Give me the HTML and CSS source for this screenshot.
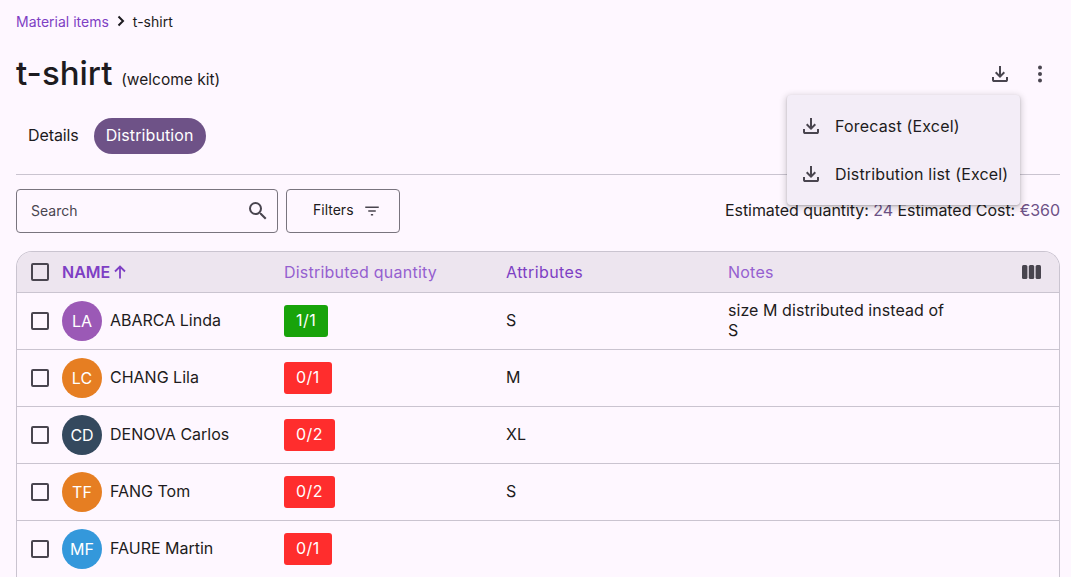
FILE: index.html
```html
<!DOCTYPE html>
<html lang="en">
<head>
<meta charset="utf-8">
<title>t-shirt</title>
<link rel="stylesheet" href="styles.css">
</head>
<body>
<svg class="sprite" width="0" height="0" aria-hidden="true">
  <symbol id="download" viewBox="0 0 24 24"><path d="M12 16 7 11l1.400-1.450 2.600 2.600V4h2v8.150l2.600-2.600L17 11l-5 5zm-6 4q-.825 0-1.413-.587T4 18v-3h2v3h12v-3h2v3q0 .825-.588 1.413T18 20H6z"/></symbol>
</svg>
<main class="page">
  <nav class="crumbs"><a class="crumb-link">Material items</a>
    <svg class="crumb-sep" viewBox="0 0 10 12"><path d="M2.500 1.500 7 6l-4.500 4.500" fill="none" stroke="currentColor" stroke-width="2"/></svg>
    <span>t-shirt</span></nav>
  <header class="title-row">
    <h1 class="title">t-shirt <small class="subtitle">(welcome kit)</small></h1>
    <div class="actions">
      <svg class="icon"><use href="#download"/></svg>
      <svg class="icon" viewBox="0 0 24 24"><circle cx="12" cy="5.500" r="2"/><circle cx="12" cy="12" r="2"/><circle cx="12" cy="18.500" r="2"/></svg>
    </div>
    <div class="menu">
      <div class="menu-item"><svg class="icon"><use href="#download"/></svg>Forecast (Excel)</div>
      <div class="menu-item"><svg class="icon"><use href="#download"/></svg>Distribution list (Excel)</div>
    </div>
  </header>
  <div class="tabs"><span class="tab">Details</span><span class="tab tab-active">Distribution</span></div>
  <div class="toolbar">
    <label class="search"><span class="search-text">Search</span>
      <svg class="icon search-icon" viewBox="0 0 24 24"><path d="M15.500 14h-.79l-.28-.27A6.471 6.471 0 0 0 16 9.500 6.500 6.500 0 1 0 9.500 16c1.610 0 3.090-.59 4.230-1.570l.27.28v.79l5 4.990L20.490 19l-4.990-5zm-6 0C7.010 14 5 11.990 5 9.500S7.010 5 9.500 5 14 7.010 14 9.500 11.990 14 9.500 14z"/></svg></label>
    <button class="filters">Filters
      <svg class="icon filter-icon" viewBox="0 0 24 24"><path d="M3 6h18v2H3zm4 5h10v2H7zm3.500 5h3v2h-3z"/></svg></button>
    <p class="stats">Estimated quantity: <b>24</b> Estimated Cost: <b>€360</b></p>
  </div>
  <section class="table">
    <div class="row head">
      <span class="check"></span>
      <span class="name-head">NAME <svg class="arrow" viewBox="0 0 14 14"><path d="M7 13.500V1.500M2 6.500 7 1.500l5 5" fill="none" stroke="currentColor" stroke-width="1.800"/></svg></span>
      <span class="col-a">Distributed quantity</span>
      <span class="col-b">Attributes</span>
      <span class="col-a col-notes">Notes
        <svg class="columns" viewBox="0 0 19 14"><rect x="0" y="0" width="5.400" height="14" rx="1.500"/><rect x="6.800" y="0" width="5.400" height="14" rx="1.500"/><rect x="13.600" y="0" width="5.400" height="14" rx="1.500"/></svg></span>
    </div>
    <div class="row">
      <span class="check"></span>
      <span class="person"><i class="avatar purple">LA</i><span class="cell-text">ABARCA Linda</span></span>
      <span><em class="badge ok">1/1</em></span><span class="cell-text">S</span>
      <span class="note">size M distributed instead of S</span>
    </div>
    <div class="row">
      <span class="check"></span>
      <span class="person"><i class="avatar orange">LC</i><span class="cell-text">CHANG Lila</span></span>
      <span><em class="badge no">0/1</em></span><span class="cell-text">M</span><span></span>
    </div>
    <div class="row">
      <span class="check"></span>
      <span class="person"><i class="avatar navy">CD</i><span class="cell-text">DENOVA Carlos</span></span>
      <span><em class="badge no">0/2</em></span><span class="cell-text">XL</span><span></span>
    </div>
    <div class="row">
      <span class="check"></span>
      <span class="person"><i class="avatar orange">TF</i><span class="cell-text">FANG Tom</span></span>
      <span><em class="badge no">0/2</em></span><span class="cell-text">S</span><span></span>
    </div>
    <div class="row">
      <span class="check"></span>
      <span class="person"><i class="avatar blue">MF</i><span class="cell-text">FAURE Martin</span></span>
      <span><em class="badge no">0/1</em></span><span></span><span></span>
    </div>
  </section>
</main>
</body>
</html>
```
FILE: styles.css
```css
* { box-sizing: border-box; }
html, body { margin: 0; height: 577px; overflow: hidden; }
body {
  background: #fef7ff;
  color: #1d1b20;
  font-family: "Inter", "Liberation Sans", sans-serif;
  font-size: 16px;
}
.sprite { position: absolute; }
.page { padding: 0 11px 0 16px; }
.icon { width: 24px; height: 24px; fill: #49454f; display: block; }
.crumbs { display: flex; align-items: center; height: 42px; font-size: 14px; gap: 7px; }
.crumb-link { color: #7e3fc4; }
.crumb-sep { width: 10px; height: 12px; color: #1d1b20; }
.title-row { position: relative; display: flex; justify-content: space-between; align-items: center; height: 64px; }
.title { margin: 5px 0 0; font-size: 33px; font-weight: 500; line-height: 60px; }
.subtitle { font-size: 15.500px; font-weight: 400; }
.actions { display: flex; gap: 16px; margin-right: 8px; }
.menu {
  position: absolute; top: 53px; right: 40px; width: 233px; height: 110px; z-index: 2;
  padding: 7px 0 0; background: #f3edf7; border-radius: 4px;
  box-shadow: 0 2px 6px 2px rgba(0,0,0,.15), 0 1px 2px rgba(0,0,0,.2);
}
.menu-item { display: flex; align-items: center; gap: 12px; height: 48px; padding-left: 12px; letter-spacing: .17px; white-space: nowrap; }
.tabs { display: flex; gap: 3px; margin-top: 12px; padding-bottom: 20px; border-bottom: 1px solid #cac4d0; }
.tab { height: 36px; line-height: 35px; padding: 0 12px; border-radius: 18px; letter-spacing: -.1px; }
.tab-active { background: #6e5287; color: #fff; letter-spacing: .1px; }
.toolbar { display: flex; align-items: center; gap: 8px; margin-top: 14px; height: 44px; }
.search {
  display: flex; align-items: center; justify-content: space-between;
  width: 262px; height: 44px; padding: 0 7px 0 14px;
  border: 1px solid #79747e; border-radius: 4px; font-size: 14px; color: #49454f;
}
.search-text { margin-top: -1px; }
.filters {
  display: flex; align-items: center; gap: 9px;
  width: 114px; height: 44px; background: none; padding: 0 0 3px 26px;
  border: 1px solid #79747e; border-radius: 4px; font: inherit; font-size: 14px; color: #1d1b20;
}
.filter-icon { width: 18px; height: 18px; margin-top: 3px; }
.stats { margin: 0 0 0 auto; line-height: 20px; padding-bottom: 2px; letter-spacing: -.05px; }
.stats b { font-weight: 400; color: #6e5287; }
.table { margin-top: 18px; border: 1px solid #cac4d0; border-radius: 16px 16px 0 0; border-bottom: 0; }
.row {
  display: grid; grid-template-columns: 45px 222px 222px 222px 1fr;
  align-items: center; height: 57px; border-bottom: 1px solid #cac4d0;
}
.head { height: 41px; background: #ede5ef; border-radius: 15px 15px 0 0; color: #7e3fc4; letter-spacing: .22px; }
.cell-text { padding-bottom: 2px; }
.check { display: block; width: 18px; height: 18px; margin-left: 14px; border: 2px solid #49454f; border-radius: 2px; }
.name-head { display: flex; align-items: center; gap: 3px; font-weight: 600; letter-spacing: 0; }
.arrow { width: 14px; height: 14px; }
.col-a { color: #9560d0; }
.col-b { letter-spacing: .4px; }
.col-notes { display: flex; justify-content: space-between; align-items: center; padding-right: 18px; }
.columns { width: 19px; height: 14px; fill: #49454f; }
.person { display: flex; align-items: center; gap: 8px; }
.avatar {
  display: flex; align-items: center; justify-content: center; width: 40px; height: 40px;
  border-radius: 50%; color: #fff; font-style: normal; font-size: 16px;
}
.purple { background: #9b59b6; }
.orange { background: #e67e22; }
.navy { background: #34495e; }
.blue { background: #3498db; }
.badge { display: inline-block; height: 32px; line-height: 31px; padding: 0 12px; border-radius: 3px; color: #fff; font-style: normal; letter-spacing: .5px; }
.ok { background: #18a30a; }
.no { background: #ff2d2d; }
.note { width: 222px; line-height: 20px; padding-bottom: 2px; letter-spacing: .06px; }
```
